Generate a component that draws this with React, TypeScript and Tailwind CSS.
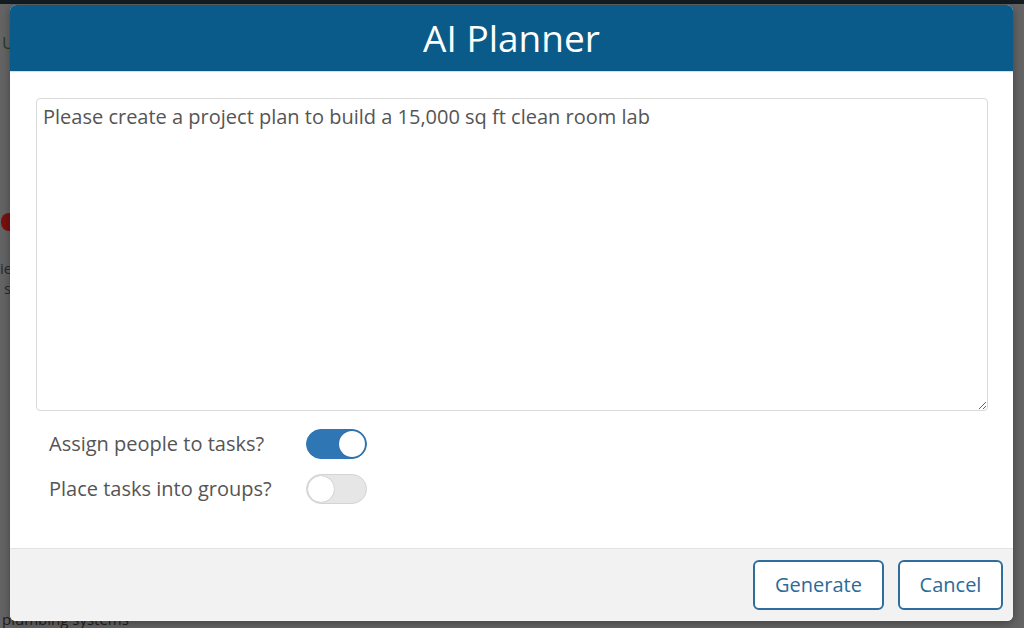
import { useState } from "react";

const Toggle = ({ on, onChange }: { on: boolean; onChange: () => void }) => {
  return (
    <button
      type="button"
      onClick={onChange}
      className={`relative w-[61px] h-[30px] rounded-full border transition-colors ${
        on ? "bg-[#2f76b5] border-[#2f76b5]" : "bg-[#e6e6e6] border-[#d4d4d4]"
      }`}
    >
      <span
        className={`absolute top-[1px] w-[26px] h-[26px] rounded-full bg-white shadow-[0_0_1px_rgba(0,0,0,0.4)] ${
          on ? "right-[1px]" : "left-[1px]"
        }`}
      />
    </button>
  );
};

export default function App() {
  const [prompt, setPrompt] = useState(
    "Please create a project plan to build a 15,000 sq ft clean room lab"
  );
  const [assign, setAssign] = useState(true);
  const [groups, setGroups] = useState(false);

  return (
    <div className="relative w-[1024px] h-[628px] overflow-hidden bg-[#646464] font-['Open_Sans',sans-serif]">
      {/* page behind the modal, dimmed */}
      <div className="absolute inset-x-0 top-0 h-[4px] bg-[#131b23]" />
      <div className="absolute left-[2px] top-[30px] text-[17px] text-[#24401f]">U</div>
      <div className="absolute left-[1px] top-[213px] w-[16px] h-[18px] rounded-full bg-[#7a1010]" />
      <div className="absolute left-[0px] top-[258px] text-[15px] leading-[20px] text-[#2a2a2a]">
        ie
        <br />
        <span className="pl-[4px]">s</span>
      </div>
      <div className="absolute left-[2px] top-[609px] text-[15px] leading-[20px] text-[#1e1e1e]">plumbing systems</div>

      <div className="relative ml-[10px] mt-[5px] w-[1003px] h-[616px] rounded-[6px] overflow-hidden bg-white shadow-[0_2px_10px_rgba(0,0,0,0.35)] flex flex-col">
        <div className="h-[67px] shrink-0 bg-[#0a5b89] border-b border-[#cfe0ea] flex items-center justify-center">
          <h1 className="text-[37px] text-white leading-none pb-[1px]">AI Planner</h1>
        </div>

        <div className="flex-1 px-[26px] pt-[26px]">
          <textarea
            value={prompt}
            onChange={(e) => setPrompt(e.target.value)}
            className="block w-[952px] h-[313px] rounded-[4px] border border-[#d9d9d9] px-[6px] py-[4px] text-[20px] leading-[28px] text-[#555] outline-none resize"
          />
          <div className="mt-[18px] pl-[13px] flex flex-col gap-[15px]">
            <div className="flex items-center">
              <span className="w-[257px] text-[20px] text-[#555]">Assign people to tasks?</span>
              <Toggle on={assign} onChange={() => setAssign(!assign)} />
            </div>
            <div className="flex items-center">
              <span className="w-[257px] text-[20px] text-[#555]">Place tasks into groups?</span>
              <Toggle on={groups} onChange={() => setGroups(!groups)} />
            </div>
          </div>
        </div>

        <div className="h-[73px] shrink-0 bg-[#f2f2f2] border-t border-[#e2e2e2] flex items-center justify-end gap-[14px] pr-[10px]">
          <button className="w-[131px] h-[50px] rounded-[6px] border-2 border-[#2f6e9c] bg-white text-[20px] text-[#2b6b98]">
            Generate
          </button>
          <button className="w-[105px] h-[50px] rounded-[6px] border-2 border-[#2f6e9c] bg-white text-[20px] text-[#2b6b98]">
            Cancel
          </button>
        </div>
      </div>
    </div>
  );
}
